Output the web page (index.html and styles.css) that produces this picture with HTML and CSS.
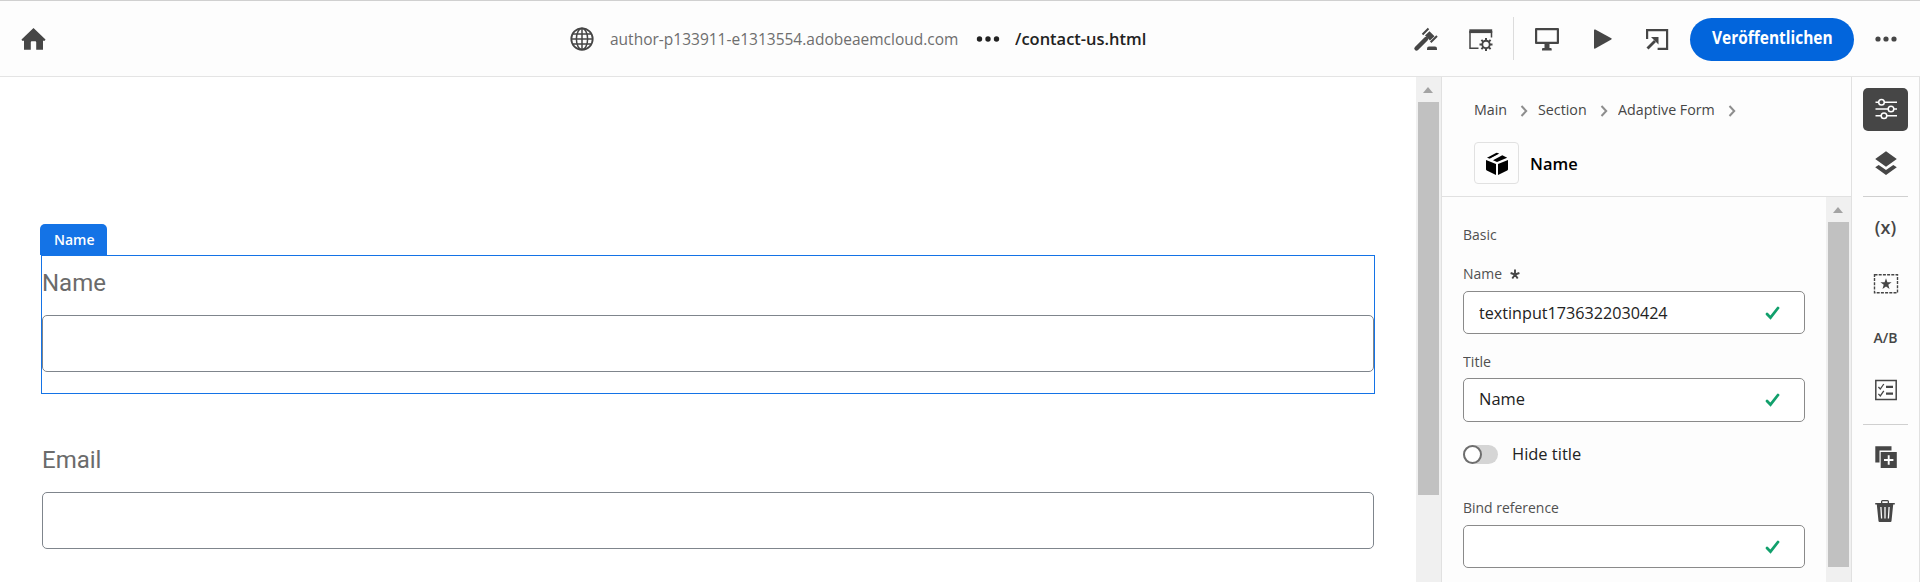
FILE: index.html
```html
<!DOCTYPE html>
<html lang="de">
<head>
<meta charset="utf-8">
<title>Universal Editor</title>
<link rel="stylesheet" href="styles.css">
</head>
<body>
<header class="topbar">
  <svg class="home" width="26" height="24" viewBox="0 0 26 24"><path fill="#464646" d="M12.500 1 .5 12.600l.6 1.100H3V22.800h6.800v-7.600q0-.9.9-.9h3.600q.9 0 .9.9v7.600H22v-9.100h1.800l.7-1.100z"/></svg>
  <div class="address">
    <svg class="globe" width="24" height="24" viewBox="0 0 24 24" fill="none" stroke="#464646" stroke-width="1.500"><circle cx="12" cy="12" r="10.700" stroke-width="1.800"/><ellipse cx="12" cy="12" rx="5.600" ry="10.700"/><path d="M12 1v22M1.300 12h21.400M3 7h18M3 17h18"/></svg>
    <span class="host"><span class="narrow">author-p133911-e1313554.adobeaemcloud.com</span></span>
    <svg class="dots" width="24" height="8" viewBox="0 0 24 8" fill="#222"><circle cx="3.500" cy="4" r="2.700"/><circle cx="12" cy="4" r="2.700"/><circle cx="20.500" cy="4" r="2.700"/></svg>
    <span class="path"><span class="snug">/contact-us.html</span></span>
  </div>
  <div class="actions">
    <svg width="26" height="26" viewBox="0 0 26 26"><path d="M3.500 22.500 13 13" stroke="#464646" stroke-width="4.400" stroke-linecap="round"/><path d="m16.500 5.200 5 5-4.500 4.300-5-5z" fill="#464646"/><path d="m9.500 8.500 6-6M17.700 16.200l6.300-6.200" stroke="#464646" stroke-width="2"/><path fill="#464646" d="M14 24v-1.500q0-2 2-2h6q2 0 2 2V24z"/></svg>
    <svg class="window" width="26" height="26" viewBox="0 0 26 26" fill="none" stroke="#464646"><path d="M2 5v17.300h8.500M23.500 5v6.500" stroke-width="1.500"/><path d="M1.300 5.200h22.900" stroke-width="3.800"/><circle cx="18" cy="18.500" r="3.700" stroke-width="1.900"/><path stroke-width="2" d="M18 12v2.500M18 22.500V25M11.500 18.500H14M22 18.500h2.500M13.400 13.900l1.800 1.800M20.800 21.300l1.800 1.800M13.400 23.100l1.800-1.800M20.800 15.700l1.800-1.800"/></svg>
    <i class="separator"></i>
    <svg class="monitor" width="26" height="26" viewBox="0 0 26 26"><path fill="#464646" fill-rule="evenodd" d="M1 3q0-1 1-1h22q1 0 1 1v14q0 1-1 1h-8.500v4h1.200q1 0 1 1v1.500H8V23q0-1 1-1h1.500v-4H2q-1 0-1-1zm2.200 1.200v11.600h19.600V4.200z"/></svg>
    <svg class="play" width="20" height="22" viewBox="0 0 20 22"><path fill="#464646" d="M1 2.200Q1 1 2.300 1.600l16 8.700q.9.600 0 1.200l-16 9Q1 21 1 20z"/></svg>
    <svg class="export" width="24" height="24" viewBox="0 0 24 24" fill="none" stroke="#464646" stroke-width="2.200"><path d="M2.100 12V3.100h20v18.700h-9.500"/><path d="M2.500 21.500 10 14" stroke-width="2.800"/><path d="M6 10h7.500v7.500z" fill="#464646" stroke="none"/></svg>
    <button class="publish"><span>Veröffentlichen</span></button>
    <svg class="more" width="24" height="8" viewBox="0 0 24 8" fill="#464646"><circle cx="4" cy="4" r="2.600"/><circle cx="12" cy="4" r="2.600"/><circle cx="20" cy="4" r="2.600"/></svg>
  </div>
</header>
<div class="workspace">
  <main class="canvas">
    <span class="tag">Name</span>
    <section class="field selected"><label>Name</label><div class="box"></div></section>
    <section class="field"><label>Email</label><div class="box"></div></section>
  </main>
  <div class="scrollbar"><i class="arrow"></i><i class="thumb main-thumb"></i></div>
  <aside class="panel">
    <div class="panel-head">
      <nav class="crumbs">
        <span class="c-main"><span class="trim">Main</span></span><svg width="8" height="12" viewBox="0 0 8 12"><path d="m1.500 1 4.700 5-4.700 5"/></svg>
        <span class="c-section"><span class="trim">Section</span></span><svg width="8" height="12" viewBox="0 0 8 12"><path d="m1.500 1 4.700 5-4.700 5"/></svg>
        <span class="c-form"><span class="trim">Adaptive Form</span></span><svg width="8" height="12" viewBox="0 0 8 12"><path d="m1.500 1 4.700 5-4.700 5"/></svg>
      </nav>
      <div class="component">
        <div class="cube"><svg width="24" height="25" viewBox="0 0 24 25"><path d="M1 8.900 11 13v11L1.800 19.600Q1 19.200 1 18.300zM13 13l10-4.100v9.400q0 .9-.8 1.300L13 24zM2 6.700 11 2q.8-.4 1.600 0l1.700.8-9.300 5zM8 9.200l9.300-5 4.900 2.500L12 11z"/><path d="m5.600 8.200 9.700-5" stroke="#fdfdfd" stroke-width="1.500"/></svg></div>
        <strong class="snug">Name</strong>
      </div>
    </div>
    <div class="panel-body">
      <div class="props">
        <div class="label basic"><span class="slim">Basic</span></div>
        <div class="label name-label"><span class="slim">Name</span><svg width="10" height="11" viewBox="0 0 10 11" stroke="#464646" stroke-width="1.900"><path d="M5 .5v5M5 5.500.6 4M5 5.500 9.400 4M5 5.500 2.300 9.500M5 5.500l2.700 4"/></svg></div>
        <div class="input"><span class="trim">textinput1736322030424</span><svg class="check" width="15" height="14" viewBox="0 0 15 14"><path d="m2 8 3.500 3.700L13 2"/></svg></div>
        <div class="label title-label"><span class="trim">Title</span></div>
        <div class="input tall"><span class="snug">Name</span><svg class="check" width="15" height="14" viewBox="0 0 15 14"><path d="m2 8 3.500 3.700L13 2"/></svg></div>
        <div class="switch-row"><i class="switch"></i><span class="snug">Hide title</span></div>
        <div class="label bind-label"><span class="slim">Bind reference</span></div>
        <div class="input bind"><svg class="check" width="15" height="14" viewBox="0 0 15 14"><path d="m2 8 3.500 3.700L13 2"/></svg></div>
      </div>
      <div class="scrollbar"><i class="arrow"></i><i class="thumb panel-thumb"></i></div>
    </div>
  </aside>
  <nav class="rail">
    <div class="tool active"><svg width="24" height="24" viewBox="0 0 24 24" fill="none" stroke="#fff" stroke-width="1.500"><path d="M1.500 5.300h3.200M10.300 5.300H23M1.500 12h12.700M19.800 12H23M1.500 18.700h5.700M12.800 18.700H23"/><circle cx="7.500" cy="5.300" r="2.800"/><circle cx="17" cy="12" r="2.800"/><circle cx="10" cy="18.700" r="2.800"/></svg></div>
    <div class="tool layers"><svg width="24" height="26" viewBox="0 0 24 26" fill="#464646"><path d="M12 1.300 22.800 9 12 16.800 1.200 9zM1.200 17.300l3.500-2.400 7.300 5.200 7.300-5.200 3.500 2.400L12 25z"/></svg></div>
    <hr>
    <div class="tool vars">(x)</div>
    <div class="tool star"><svg width="26" height="22" viewBox="0 0 26 22"><rect x="1.500" y="1.700" width="23" height="18" fill="none" stroke="#464646" stroke-width="1.400" stroke-dasharray="3 1.200"/><path fill="#464646" d="m13 5.200 1.400 4h4.200l-3.300 2.500 1.200 4.200-3.500-2.500-3.500 2.500 1.200-4.200-3.300-2.500h4.200z"/></svg></div>
    <div class="tool ab">A/B</div>
    <div class="tool list"><svg width="24" height="22" viewBox="0 0 24 22" fill="none" stroke="#464646"><rect x="1.800" y="1.500" width="20.400" height="19" stroke-width="1.500"/><path stroke-width="1.300" d="m4.400 8 1.900 2L9.800 5M4.400 14.900l1.900 2 3.500-5"/><path stroke-width="2.300" d="M12 7.800h7M12 14.700h7"/></svg></div>
    <hr class="second">
    <div class="tool copy"><svg width="24" height="24" viewBox="0 0 24 24"><path fill="#464646" d="M1.300 1.200h16.200v4.300H5.500v12H1.300zM6.700 7h16.100v16H6.700z"/><path d="M14.700 10.300v9.400M10 15h9.400" stroke="#fff" stroke-width="1.900"/></svg></div>
    <div class="tool trash"><svg width="22" height="24" viewBox="0 0 22 24"><path fill="#464646" fill-rule="evenodd" d="M1.200 4H7V2.500Q7 1 8.500 1h5Q15 1 15 2.500V4h5.800v1.500h-1.600L17.500 22q-.1.900-1 .9h-11q-.9 0-1-.9L2.800 5.500H1.200zM8.300 4h5.400V2.300H8.300z"/><path d="m6.900 8 .7 11.500M11 8v11.500M15.100 8l-.7 11.500" stroke="#fdfdfd" stroke-width="1.300"/></svg></div>
  </nav>
</div>
</body>
</html>
```
FILE: styles.css
```css
*, *::before { box-sizing: border-box; }
body {
  margin: 0;
  width: 1920px;
  height: 582px;
  overflow: hidden;
  background: #fff;
  color: #464646;
  font-family: "Open Sans", "Noto Sans", sans-serif;
}
svg { display: block; flex: none; }

/* condensed text widths */
.narrow, .slim, .trim, .snug { display: inline-block; transform-origin: 0 50%; white-space: nowrap; }
.narrow { transform: scaleX(0.912); }
.slim { transform: scaleX(0.93); }
.trim { transform: scaleX(0.95); }
.snug { transform: scaleX(0.968); }

.topbar {
  height: 77px;
  display: flex;
  align-items: center;
  border-top: 1px solid #d0d0d0;
  border-bottom: 1px solid #e4e4e4;
  background: #fdfdfd;
  padding-left: 21px;
}
.address {
  display: flex;
  align-items: center;
  margin-left: 523px;
  line-height: 24px;
  white-space: nowrap;
}
.host { width: 351px; margin-left: 16px; font-size: 17px; color: #6e6e6e; }
.dots { margin-left: 15px; }
.path { width: 134px; margin-left: 15px; font-size: 17px; font-weight: 600; color: #222; }
.actions { display: flex; align-items: center; margin-left: 264px; }
.window { margin-left: 29px; }
.separator { width: 1px; height: 43px; margin-left: 19px; background: #dcdcdc; }
.monitor { margin-left: 20px; }
.play { margin-left: 33px; }
.export { margin-left: 32px; }
.publish {
  width: 164px;
  height: 43px;
  margin: 2px 0 0 21px;
  padding: 0 0 4px;
  border: 0;
  border-radius: 22px;
  background: #0265dc;
  color: #fff;
  font: 700 17px/24px "Open Sans", "Noto Sans", sans-serif;
}
.publish span { display: inline-block; transform: scaleX(0.91); }
.more { margin-left: 20px; }

.workspace { display: flex; height: 505px; }
.canvas { width: 1416px; padding: 147px 40px 0; }
.tag {
  display: block;
  width: 67px;
  height: 31px;
  padding-left: 14px;
  border-radius: 5px 5px 0 0;
  background: #1473e6;
  color: #fff;
  font-size: 14px;
  font-weight: 600;
  line-height: 31px;
}
.field { width: 1334px; margin-left: 1px; padding: 1px; }
.selected { height: 139px; border: 1px solid #1473e6; padding: 0; margin-bottom: 38px; }
.field label {
  display: block;
  height: 59px;
  padding-top: 13px;
  color: #6b6b6b;
  font: 24px/28px Roboto, sans-serif;
}
.box { height: 57px; border: 1px solid #7f858c; border-radius: 5px; background: #fff; }

.scrollbar { width: 25px; padding: 10px 2px 0; background: #f0f0f0; flex: none; }
.arrow {
  display: block;
  width: 0;
  margin: 0 0 9px 5px;
  border: 5.5px solid transparent;
  border-top: 0;
  border-bottom: 6px solid #a3a3a3;
}
.thumb { display: block; width: 21px; background: #c1c1c1; }
.main-thumb { height: 393px; }
.panel-thumb { height: 345px; }

.panel { width: 410px; border-left: 1px solid #e1e1e1; background: #fdfdfd; }
.panel-head { height: 120px; border-bottom: 1px solid #e1e1e1; padding: 21px 0 0 32px; }
.crumbs { display: flex; align-items: center; height: 22px; font-size: 15px; white-space: nowrap; }
.crumbs svg { fill: none; stroke: #8e8e8e; stroke-width: 2; margin-top: 3px; }
.c-main { width: 46px; }
.c-section { width: 62px; margin-left: 10px; }
.c-form { width: 110px; margin-left: 10px; }
.component { display: flex; align-items: center; margin-top: 22px; }
.component strong { margin-left: 11px; font-size: 17px; font-weight: 600; color: #000; }
.cube {
  width: 45px;
  height: 42px;
  display: grid;
  place-items: center;
  border: 1px solid #e1e1e1;
  border-radius: 4px;
}
.panel-body { display: flex; height: 385px; }
.props { width: 384px; padding: 26px 20px 0 21px; }
.label { height: 22px; line-height: 22px; font-size: 15px; color: #505050; }
.name-label { display: flex; align-items: center; margin-top: 17px; }
.name-label svg { margin-left: 5px; margin-top: 3px; }
.input {
  width: 342px;
  height: 43px;
  margin-top: 7px;
  padding: 0 24px 0 15px;
  display: flex;
  align-items: center;
  border: 1px solid #8a8a8a;
  border-radius: 5px;
  background: #fff;
  color: #222;
  font-size: 17px;
}
.tall { height: 44px; margin-top: 6px; }
.tall span { padding-bottom: 3px; }
.input .check { margin-left: auto; fill: none; stroke: #12a06c; stroke-width: 2.8; stroke-linecap: round; }
.title-label { margin-top: 16px; }
.switch-row { display: flex; align-items: center; height: 24px; margin-top: 20px; font-size: 17px; line-height: 24px; color: #222; }
.switch { width: 35px; height: 19px; margin: 1px 14px 0 0; border-radius: 10px; background: #d5d5d5; }
.switch::before { content: ""; display: block; width: 19px; height: 19px; border: 2px solid #6e6e6e; border-radius: 50%; background: #fff; }
.bind-label { margin-top: 30px; }

.rail {
  width: 69px;
  display: flex;
  flex-direction: column;
  align-items: center;
  padding-top: 11px;
  border-left: 1px solid #e1e1e1;
  border-right: 1px solid #e1e1e1;
  background: #fdfdfd;
}
.tool { width: 45px; height: 43px; display: grid; place-items: center; flex: none; }
.active { border-radius: 5px; background: #464646; padding-bottom: 2px; }
.layers { margin-top: 11px; padding-bottom: 1px; }
.rail hr { width: 45px; height: 1px; margin: 11px 0 0; border: 0; background: #d0d0d0; flex: none; }
.rail .second { margin-top: 13px; }
.vars { margin-top: 9px; padding-bottom: 1px; font-size: 18px; font-weight: 600; }
.star { margin-top: 13px; }
.ab { margin-top: 11px; padding-bottom: 1px; font-size: 14px; font-weight: 600; }
.list { margin-top: 9px; }
.copy { margin-top: 10px; }
.trash { margin-top: 11px; padding-right: 1px; }
```
